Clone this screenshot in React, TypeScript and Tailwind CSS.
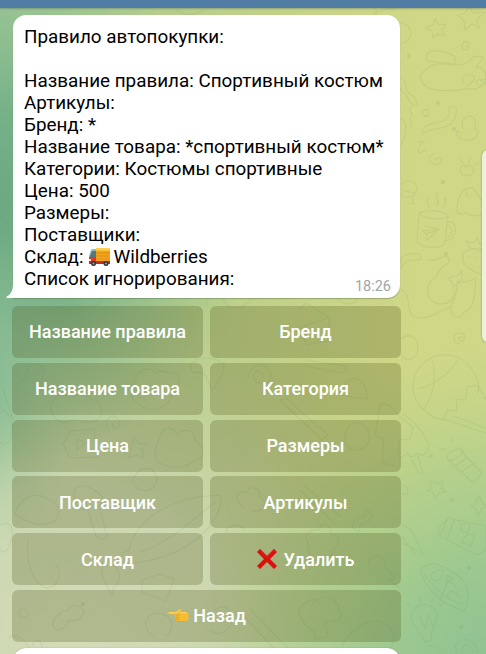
const messageLines = [
  "Правило автопокупки:",
  "",
  "Название правила: Спортивный костюм",
  "Артикулы:",
  "Бренд: *",
  "Название товара: *спортивный костюм*",
  "Категории: Костюмы спортивные",
  "Цена: 500",
  "Размеры:",
  "Поставщики:",
];

const buttons = [
  "Название правила",
  "Бренд",
  "Название товара",
  "Категория",
  "Цена",
  "Размеры",
  "Поставщик",
  "Артикулы",
  "Склад",
];

const keyClass =
  "flex h-[52px] items-center justify-center rounded-md bg-[#464c10]/24 text-[18.05px] font-medium text-white";

function Wallpaper() {
  return (
    <svg className="absolute inset-0" width="486" height="654" viewBox="0 0 486 654" aria-hidden="true">
      <defs>
        <linearGradient id="base" x1="0" y1="0" x2="1" y2="0">
          <stop offset="0" stopColor="#9dc697" />
          <stop offset="0.4" stopColor="#bace8b" />
          <stop offset="0.85" stopColor="#d0d787" />
        </linearGradient>
        <radialGradient id="green" gradientUnits="userSpaceOnUse" cx="0" cy="0" r="1" gradientTransform="translate(-10 210) scale(265 255)">
          <stop offset="0" stopColor="#6ca880" />
          <stop offset="0.4" stopColor="#74b087" stopOpacity="0.95" />
          <stop offset="1" stopColor="#8fbe8e" stopOpacity="0" />
        </radialGradient>
        <radialGradient id="pale" gradientUnits="userSpaceOnUse" cx="0" cy="0" r="1" gradientTransform="translate(70 680) scale(350 400)">
          <stop offset="0" stopColor="#d4dbb8" />
          <stop offset="0.5" stopColor="#cdd9b2" stopOpacity="0.95" />
          <stop offset="1" stopColor="#c5d5a2" stopOpacity="0" />
        </radialGradient>
        <radialGradient id="corner" gradientUnits="userSpaceOnUse" cx="0" cy="0" r="1" gradientTransform="translate(500 680) scale(310 340)">
          <stop offset="0" stopColor="#8cc092" />
          <stop offset="0.35" stopColor="#98c791" stopOpacity="0.92" />
          <stop offset="0.65" stopColor="#a6cc8e" stopOpacity="0.6" />
          <stop offset="1" stopColor="#bcd38c" stopOpacity="0" />
        </radialGradient>
        <radialGradient id="edge" gradientUnits="userSpaceOnUse" cx="0" cy="0" r="1" gradientTransform="translate(-10 390) scale(90 160)">
          <stop offset="0" stopColor="#82b892" stopOpacity="0.8" />
          <stop offset="1" stopColor="#a2c9a0" stopOpacity="0" />
        </radialGradient>
      </defs>
      <rect width="486" height="654" fill="url(#base)" />
      <rect width="486" height="654" fill="url(#pale)" />
      <rect width="486" height="654" fill="url(#green)" />
      <rect width="486" height="654" fill="url(#edge)" />
      <rect width="486" height="654" fill="url(#corner)" />
      <g fill="none" stroke="#6d8f54" strokeOpacity="0.13" strokeWidth="1.1" strokeLinecap="round" strokeLinejoin="round">
        {/* starfish, star and swirl */}
        <path d="M435 19l4 6 7-1-4 6 3 6-7-2-5 4-1-7-6-3 7-3zM458 15l7-2 4-7 4 7 12-1-8 7 2 9-7-4-7 6-1-9zM469 49c-6 3-10-4-5-7 4-2 8 2 5 5-2 1-4-1-2-3" />
        {/* sleeping cat */}
        <path d="M420 76c5-8 15-14 25-12 12 2 22 2 28-7 5-1 12-2 9 3l-6 7c7 0 10 5 10 10-1 8-10 15-19 11-8 3-26 4-38 0-6-2-8-8-9-12zM426 61l1-7c6-6 22-2 28 3v7l-28-3M464 83c-4-5 2-12 6-7 3-2 6 2 3 5l-5 5M478 85c-4-3 1-8 3-4 2-4 7 0 4 4" />
        <path d="M400 22c13 4 16 16 1 22M401 78c7 2 3 11 8 15 5 3 9 7 8 13-8 0-8-9-13-13s-6-9-4-15M411 107c-5 5 4 5 0 10s4 5 0 10M427 117c-7-1-6-9 0-7 5 2 1 8-2 5M422 134c1-9 9-10 17-12 8-1 12-8 10-15h7c2 12-5 18-12 20-8 3-14 1-22 7M401 118c8 6 5 17 0 27" />
        <path d="M464 129c-4-3-1-13 5-13 7 0 8 8 5 12 6 1 4 9-1 11-9 4-16-1-17-8l6 2M418 142h7M421 143l-3 8M426 150l-7 3" />
        <path d="M435 159c7-3 8 3 3 5-8 2-12-7-5-10M461 172c-3-5 3-9 5-5 5-4 10 1 6 7-4 3-12 2-11-2M463 163l-3-4M469 163l1-5M475 165l4-3" />
        {/* fish and candy */}
        <path d="M402 184c7-8 17 0 14 8-3 7-14 7-15 1M402 190l13 3M412 196l2 8-5-1M457 212c0-18 7-25 15-24 7 6 10 15 14 18v9c-9 1-17 2-20-3-3 4-8 1-9 0M466 190l1 7M471 196h1" />
        {/* steaming mug */}
        <path d="M419 213c10-4 21-3 29 2l-3 28c-3 6-25 6-28-2l2-28c6 7 23 7 29 3M448 222c10-3 11 18-3 19M448 226c5 0 5 10-1 11M424 226l15 3-12 11-1-6-3-3 16-2-12 5M428 208c3-5-4-5 0-10M437 206c4-7-4-8 1-14M443 207c5-3-1-5 3-9" />
        {/* strawberry */}
        <path d="M463 253c7-5 18-6 23-3v27c-8-5-20-7-23-16zM470 248l-4-7 8 2 3-5 3 7 6-2-5 8zM469 256h1M476 257h1M471 265h1M478 267h1M481 275h1" />
        <path d="M401 263c-2-9 10-10 18-9 4 2 2 6-2 6-9 0-15 3-16 9M427 260c7 1 11 0 16-3 6-3 8 4 4 7-5 3-9 6-11 13M436 277c-13 7-11 26 5 27 14 0 18-16 7-26 5-2 13-1 13-7 3 0 2 12-7 15M401 290c9 2 6 15 10 24 4 5 11 5 20 2l21-10M452 303c5-6 4-14 6-22 8 3 15-2 18-3-2 15 0 31-12 34-5 11-17 3-12-9" />
        {/* hot-air balloon */}
        <path d="M444 420c-16-2-31-17-31-33a32 32 0 0 1 58-19c7 9 10 19 6 26" />
        <path d="M424 409c10-17 12-27 9-48M418 389c13-3 31-14 40-29M444 420l3-10 10 1-1-12 10 1 1-13 10-2M446 420l40 13M453 416l33 12M477 385l9 14M402 338c12-7 18 4 15 14-2 9-12 10-16 2M460 344c-8 0-8-12 0-11 7 1 6 9 0 8-3-2 0-6 3-3" />
        {/* ice lolly, cracker, stars */}
        <path d="M403 414c12 7 21 20 26 30-2 12-7 13-12 9-3 6-8 4-9 0l-6 4M412 460l7 13M423 474l-5-18M447 457c2-6 12-10 16-7 1 4-11 12-15 10zM448 460l24 22c4-1 9-5 9-10l-20-21M455 466l13-9M461 472l13-9M451 442l1-5M440 449h5M403 494c5 3 8-8 0-8M432 488l-2-7 7 3 6-3-2 7 5 4-7 1-4 5-2-6-6-2zM475 505l4-9 4 8 4 2-5 3-4 7-2-7-5-3z" />
        {/* snack bag, pizza slice and lamp */}
        <path d="M439 528l9-10 38 8v24l-9 5-38-19zM448 518l-8 18M454 520l-7 20M461 524h9l-2 11 7-2-4 13-10-4 7-9-7-2z" />
        <path d="M420 571c9-15 28-3 41 7 9 10 8 24 3 33-17-5-35-16-44-40zM424 574c10 15 21 25 37 30M431 575c0 8 7 7 11 1s-3-10-11-1M449 578l-9 23M451 600c-8-4-1-12 5-7l5 5M446 575l7 3-5 5zM451 582l7 8" />
        <path d="M425 642c-4-11-16-17-13-28 4-14 24-11 25 1 1 11-7 12-6 25zM420 617l5 12 4-15 4 14M427 646h8M457 653c-8-16 20-19 20-1M462 653c-2-9 9-11 11-1M411 607l-4-4M420 602l-1-5M431 602l3-4M440 606l4-4" />
        {/* objects under the keyboard */}
        <path d="M21 382c7-5 4-20 17-18 10 3 6 21-3 22M53 415c-7-17 8-23 13-18 4-15 23-10 24 2 15 1 16 20 2 23-14 2-16-5-22-1-9 4-13 0-17-6M136 381c-2-9 13-17 19-8 8-6 14 3 21 0 7 4 2 19-5 24-4 14-26 15-32 7-9-4-11-18-3-23M70 431l24-2 4 28-28 1-7-14zM77 439l9 4-10 7zM132 445l2-8 5 7 8-1-5 7 2 8-8-3-7 3 2-9-6-5zM107 427c-3-13 13-15 12-3-1 8-9 4-6-1" />
        <path d="M160 437c4-12 14-11 17-2 8-9 20-4 18 6 11 4 11 18-1 20-10 10-35 7-38-3-2-9 1-14 4-21M193 362c7-7 24-4 31 2 0 13-7 18-12 27-6-14-5-21-18-18-5-4-4-9-1-11M248 377c3-15 20-16 23-3 2 13-18 13-17 1 2-7 10-4 9 1M300 308l6-5 24 15-2 23-21 4-10-17 31-10M305 360l43 6-4 7-39-7M354 378c8 0 12 8 14 21l-15-2-14-2c5-5 3-13 15-17M287 399l41 36-6 5-42-40z" />
        <path d="M352 424c9-6 18 5 17 15-1 13-21 15-24 3-1-9 2-15 7-18M380 405c11-4 14 7 20 12l13 10-3 12-11 1v27l-17-4 2-24-9-3zM15 514c7-21 24-22 34-14 10 1 13 17 4 22-11 5-23 3-38-8M28 538c-2 24 3 42 16 49 12 4 20-13 12-22M76 501c-7-14 4-19 18-11 10 5 11 11 5 15l8 32c-6 4-10 2-12-3l-7-25c-9 1-11-1-12-8M129 550c8-34 46-54 92-55 3 20-23 59-81 67-24 7-21-11-11-12zM140 552c23-7 47-26 75-50M133 483c-1-8 9-17 18-14 11 9 4 20-3 21-9 1-12-2-15-7" />
        <path d="M21 619c-7-5 1-14 6-8 4 7-7 9-6 2M53 626c-2-7 8-15 16-16 2-6 9-7 15 1-2 8-6 11-15 9-4 10-11 13-16 6M104 580c-5-15-1-24 7-17 11 7 10 19 3 24l-2 9zM142 580l18-6 14 5-8 22-24-9zM154 637c-14-9-9-24 4-24 13 1 19 14 8 23M209 621c2-12 15-20 21-8 8 13-9 26-20 18M306 537c2-6 7-8 12-7 5-10 14-6 12 4 9 0 12 8 4 15-2 10-17 15-23 8-4-7-2-16-5-20M369 565c0-14 18-11 16 1l10 13-6 1 11 8M300 616c-4-9 10-20 17-15 9-10 24 1 21 9 6 3 3 12-4 11l-9 1 3 15-14 2c4-11-8-7-14-23M342 647c7-17 27-30 40-25 11 4 15 17 8 27" />
        <path d="M3 390l10 29-10-9M0 442c9 6 12-2 12-20M0 525c12-6 15 6 10 19-3 10-11 10-10 3M9 638c8-6 16 2 22 13M32 646c2-8 13-8 9 5M244 508c-12-10-7-18 2-16 6-8 15-3 13 4 11 6 3 18-6 15M226 532c1-7 12-10 18-2M300 490l34 33M304 485l37 32M355 519l10-3 2-7 6 7-6 6-7 3-1 7-7-5zM242 614l37 40M250 609l40 41M375 4c1 8 2 10 1 12M365 23c8-10 16-16 32-14M175 8c5 8 16 9 29 2M17 100c-5 8-7 18-3 26M0 215l7 10M72 300c8 10 27 9 30-2M207 306c-4-12 13-15 18-4 4 10 19 7 27-4M337 298c7 9 18 7 22-1M402 526c11 1 12 8 21 30M402 536l13 19M403 543l14 8" />
      </g>
      <g fill="#6d8f54" fillOpacity="0.14">
        <circle cx="409" cy="56" r="2" /><circle cx="438" cy="103" r="2" /><circle cx="454" cy="129" r="2" /><circle cx="443" cy="182" r="2" /><circle cx="446" cy="254" r="2" /><circle cx="431" cy="456" r="2" /><circle cx="452" cy="500" r="2" /><circle cx="469" cy="568" r="2" /><circle cx="461" cy="627" r="2" /><circle cx="83" cy="604" r="2" />
      </g>
    </svg>
  );
}

function Truck() {
  return (
    <svg width="23" height="20" viewBox="0 0 23 20" className="mt-px mr-[3px] ml-1 inline-block shrink-0" role="img" aria-label="🚚">
      <path d="M1 9l2-6 1-1h6v13H1z" fill="#98b8bd" />
      <path d="M2 9l2-5h4v6H2z" fill="#56777e" />
      <path d="M1 10h8v7H1z" fill="#da3b31" />
      <path d="M8 1l14 .5V15H8z" fill="#f5a719" />
      <path d="M8 1l14 .5v2H8z" fill="#ffd24d" />
      <path d="M8 6h14M8 9h14M8 12h14" stroke="#db891c" strokeWidth="1" />
      <path d="M1 14h21v3H1z" fill="#bc3029" />
      <path d="M1 12h2v2H1z" fill="#ffe8aa" />
      <circle cx="5.5" cy="16.5" r="2.5" fill="#353535" /><circle cx="18" cy="16.5" r="2.5" fill="#353535" />
      <circle cx="5.5" cy="16.5" r="1" fill="#aaa" /><circle cx="18" cy="16.5" r="1" fill="#aaa" />
    </svg>
  );
}

function Cross() {
  return (
    <svg width="22" height="22" viewBox="0 0 22 22" className="mr-[5px] shrink-0" role="img" aria-label="❌">
      <path d="M1 4l3-3 7 7 7-7 3 3-7 7 7 7-3 3-7-7-7 7-3-3 7-7z" fill="#d9100e" />
      <path d="M1 4l3-3 7 7 7-7 1 1-8 8-8-8z" fill="#e31d18" />
    </svg>
  );
}

function Hand() {
  return (
    <svg width="22" height="15" viewBox="0 0 22 15" className="mr-1 shrink-0" role="img" aria-label="👈">
      <path d="M1.5 6C.4 5.5.6 4 1.8 4l6.7.3 4-3c1-.7 2.2 0 1.7 1L13.5 4H19l2.5 1.5v6L18 13.7h-6c-2.6 0-3.4-1-2.8-2.2C8.1 10.8 8 9.9 8.7 9.2 7.8 8.6 7.8 7.5 8.7 6.8z" fill="#f7bd32" />
      <path d="M2 4.7l7 .2 4-3M13 4.6h6" fill="none" stroke="#ffdc65" />
      <path d="M9 6.9l3.5.2M9 9.3l3.3.2M9.5 11.6l2.5.1" stroke="#dc951f" strokeWidth=".8" strokeLinecap="round" />
      <path d="M10 13c2 .6 5 .4 8 .3" fill="none" stroke="#e19a1d" strokeWidth=".8" />
    </svg>
  );
}

export default function App() {
  return (
    <main className="relative h-[654px] w-[486px] overflow-hidden font-['Roboto',sans-serif]">
      <Wallpaper />
      <div className="relative flex flex-col">
        <header className="h-2 bg-[#517da5] shadow-[0_1px_2px_rgba(70,100,90,0.4)]" />
        <section className="relative mt-[7px] ml-[13px] h-[283px] w-[387px] rounded-t-[13px] rounded-br-[13px] bg-white px-[11px] pt-[11px] text-[18.85px] leading-[22px] text-black shadow-[0_1px_1px_rgba(80,110,70,0.4)]">
          <svg className="absolute bottom-0 -left-[7px]" width="8" height="16" viewBox="0 0 8 16" aria-hidden="true">
            <path d="M7 0H8V16H1Q-.5 15.5.8 14.6Q7 11 7 3z" fill="white" />
          </svg>
          {messageLines.map((line, i) => (
            <p key={i} className="h-[22px] whitespace-nowrap">{line}</p>
          ))}
          <p className="flex h-[22px] whitespace-nowrap">Склад:<Truck />Wildberries</p>
          <p className="h-[22px] whitespace-nowrap">Список игнорирования:</p>
          <time className="absolute right-[9px] bottom-[2px] text-[14.5px] leading-[18px] text-[#a0a5aa]">18:26</time>
        </section>
        <section className="mt-2 ml-3 grid w-[389px] grid-cols-2 gap-x-[7px] gap-y-[4.8px]">
          {buttons.map((label) => (
            <button key={label} className={keyClass}>{label}</button>
          ))}
          <button className={keyClass}><Cross />Удалить</button>
          <button className={`${keyClass} col-span-2`}><Hand />Назад</button>
        </section>
        <section className="mt-[6px] ml-[13px] h-10 w-[387px] rounded-[13px] bg-white shadow-[0_0_1px_rgba(60,80,50,0.6)]" />
      </div>
      <aside className="absolute top-[150px] left-[482px] h-[192px] w-3 rounded-[6px] bg-[#edf0df] shadow-[0_0_2px_rgba(80,100,60,0.6)]" />
    </main>
  );
}
